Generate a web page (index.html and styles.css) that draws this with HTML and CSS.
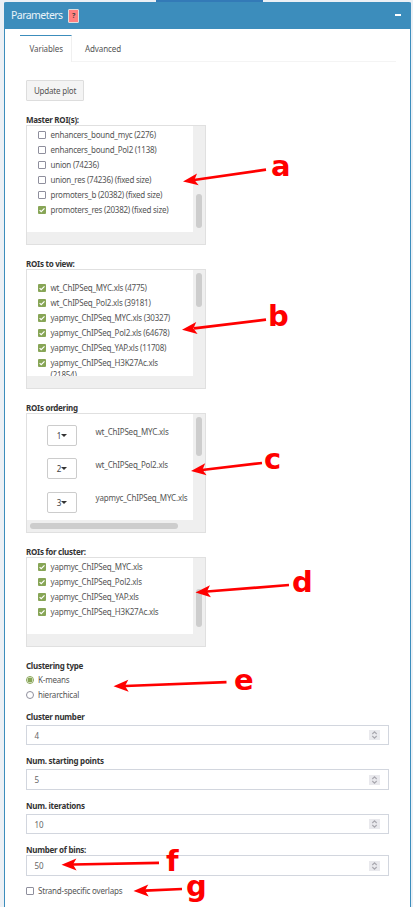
FILE: index.html
```html
<!DOCTYPE html>
<html lang="en">
<head>
<meta charset="utf-8">
<title>Parameters</title>
<link rel="stylesheet" href="styles.css">
</head>
<body>
<svg width="0" height="0" class="defs">
  <symbol id="tick" viewBox="0 0 8 8"><path d="M1.6 4.1 3.2 5.7 6.5 2.3" fill="none" stroke="#fff" stroke-width="1.2"/></symbol>
  <symbol id="spin" viewBox="0 0 11 10"><path d="M3.3 4 5.5 1.9 7.7 4M3.3 6 5.5 8.1 7.7 6" fill="none" stroke="#aaa9b0" stroke-width="1.2"/></symbol>
</svg>
<div class="strip"></div>
<section class="panel">
  <header class="head"><span class="title">Parameters</span><span class="help">?</span><span class="minus"></span></header>
  <nav class="tabs"><a class="tab active">Variables</a><a class="tab">Advanced</a></nav>
  <main class="content">
    <button class="update">Update plot</button>

    <h4>Master ROI(s):</h4>
    <div class="box">
      <div class="view master">
        <label class="row"><i class="check"></i>enhancers_bound_myc (2276)</label>
        <label class="row"><i class="check"></i>enhancers_bound_Pol2 (1138)</label>
        <label class="row"><i class="check"></i>union (74236)</label>
        <label class="row"><i class="check"></i>union_res (74236) (fixed size)</label>
        <label class="row"><i class="check"></i>promoters_b (20382) (fixed size)</label>
        <label class="row"><svg class="check on"><use href="#tick"/></svg>promoters_res (20382) (fixed size)</label>
      </div>
      <div class="track"><div class="thumb t1"></div></div>
    </div>

    <h4>ROIs to view:</h4>
    <div class="box">
      <div class="view rois">
        <label class="row"><svg class="check on"><use href="#tick"/></svg>wt_ChIPSeq_MYC.xls (4775)</label>
        <label class="row"><svg class="check on"><use href="#tick"/></svg>wt_ChIPSeq_Pol2.xls (39181)</label>
        <label class="row"><svg class="check on"><use href="#tick"/></svg>yapmyc_ChIPSeq_MYC.xls (30327)</label>
        <label class="row"><svg class="check on"><use href="#tick"/></svg>yapmyc_ChIPSeq_Pol2.xls (64678)</label>
        <label class="row"><svg class="check on"><use href="#tick"/></svg>yapmyc_ChIPSeq_YAP.xls (11708)</label>
        <label class="row"><svg class="check on"><use href="#tick"/></svg>yapmyc_ChIPSeq_H3K27Ac.xls</label>
        <div class="wrapped">(21854)</div>
      </div>
      <div class="track"><div class="thumb t2"></div></div>
    </div>

    <h4>ROIs ordering</h4>
    <div class="box">
      <div class="view order">
        <div class="item"><span class="select">1<i class="caret"></i></span><span class="name">wt_ChIPSeq_MYC.xls</span></div>
        <div class="item"><span class="select">2<i class="caret"></i></span><span class="name">wt_ChIPSeq_Pol2.xls</span></div>
        <div class="item"><span class="select">3<i class="caret"></i></span><span class="name">yapmyc_ChIPSeq_MYC.xls</span></div>
      </div>
      <div class="track"><div class="thumb t3"></div></div>
      <div class="hthumb"></div>
    </div>

    <h4>ROIs for cluster:</h4>
    <div class="box short">
      <div class="view cluster">
        <label class="row"><svg class="check on"><use href="#tick"/></svg>yapmyc_ChIPSeq_MYC.xls</label>
        <label class="row"><svg class="check on"><use href="#tick"/></svg>yapmyc_ChIPSeq_Pol2.xls</label>
        <label class="row"><svg class="check on"><use href="#tick"/></svg>yapmyc_ChIPSeq_YAP.xls</label>
        <label class="row"><svg class="check on"><use href="#tick"/></svg>yapmyc_ChIPSeq_H3K27Ac.xls</label>
      </div>
      <div class="track"><div class="thumb t4"></div></div>
    </div>

    <h4>Clustering type</h4>
    <div class="radios">
      <label class="row"><i class="radio picked"></i>K-means</label>
      <label class="row"><i class="radio"></i>hierarchical</label>
    </div>

    <h4 class="first">Cluster number</h4>
    <div class="field f1"><span>4</span><svg class="spin"><use href="#spin"/></svg></div>
    <h4 class="second">Num. starting points</h4>
    <div class="field f2"><span>5</span><svg class="spin"><use href="#spin"/></svg></div>
    <h4 class="third">Num. iterations</h4>
    <div class="field f1"><span>10</span><svg class="spin"><use href="#spin"/></svg></div>
    <h4 class="fourth">Number of bins:</h4>
    <div class="field f4"><span>50</span><svg class="spin"><use href="#spin"/></svg></div>
    <label class="row strand"><i class="check"></i>Strand-specific overlaps</label>
  </main>
</section>
<svg class="notes" viewBox="0 0 413 907">
  <defs><path id="head" d="M0 0 15-6 11.5 0 15 6Z"/></defs>
  <g fill="none" stroke="#f00" stroke-width="2.7">
    <path d="M194 180 266 169.700M194 328.400 266 319.600M202 470 262 463M207 591.500 289 585M125 686 226.500 682.200M73 864.500 159 862.800M145 890.600 182 889"/>
  </g>
  <g fill="#f00">
    <use href="#head" transform="translate(183 181.500) rotate(-8)"/>
    <use href="#head" transform="translate(182 329.700) rotate(-6.500)"/>
    <use href="#head" transform="translate(191 471) rotate(-6.500)"/>
    <use href="#head" transform="translate(195.500 592.500) rotate(-4.500)"/>
    <use href="#head" transform="translate(113.500 686.300) rotate(-2)"/>
    <use href="#head" transform="translate(61.500 864.800) rotate(-1)"/>
    <use href="#head" transform="translate(133.500 891) rotate(-2)"/>
  </g>
  <g class="letters">
    <text x="271" y="176">a</text><text x="268" y="325.500">b</text><text x="264" y="468.500">c</text><text x="292" y="591.500">d</text><text x="234" y="690">e</text><text x="166" y="871">f</text><text x="186" y="895.500">g</text>
  </g>
</svg>
</body>
</html>
```
FILE: styles.css
```css
* { box-sizing: border-box; }
html, body { margin: 0; height: 907px; overflow: hidden; }
body { background: #ecf0f5; color: #555; font: 8px/15px "Noto Sans", sans-serif; letter-spacing: -0.2px; }
.defs { position: absolute; }
.strip { width: 107px; height: 2px; margin-left: 156px; background: #337ab7; }
.panel { height: 905px; margin: 0 2px 0 4px; background: #fff; border: solid #3c8dbc; border-width: 0 1px; border-radius: 2px 2px 0 0; }
.head { display: flex; align-items: center; height: 27px; margin: 0 -1px; padding: 0 10px 0 7px; background: #3c8dbc; color: #fff; border-radius: 2px 2px 0 0; }
.title { width: 51px; font-size: 10.500px; letter-spacing: -0.550px; color: #e9f3f9; }
.help { width: 11px; height: 14px; margin-left: 6px; border: 1px solid #ddd; border-radius: 1px; background: #ff7f7f; color: #444; font: bold 7px/12px "Noto Sans", sans-serif; text-align: center; }
.minus { width: 6px; height: 2px; margin: -1px 0 0 auto; background: #fff; }
.tabs { display: flex; height: 27px; margin: 6px 14px 0 15px; border-bottom: 1px solid #f4f4f4; }
.tab { height: 27px; padding: 6px 9px 0 13px; letter-spacing: -0.100px; }
.active { width: 52px; padding: 5px 0 0 9.500px; background: #fff; border-top: 1px solid #3c8dbc; border-right: 1px solid #f0f0f0; }
.content { display: flex; flex-direction: column; padding: 18px 21px 0; }
.update { width: 58px; height: 21px; padding: 0; border: 1px solid #ddd; border-radius: 1px; background: #f4f4f4; color: #555; font: 8px/18px "Noto Sans", sans-serif; letter-spacing: -0.200px; }
h4 { height: 12px; margin: 12px 0 0; color: #333; font-size: 8px; line-height: 13px; letter-spacing: -0.270px; }
.box { position: relative; display: flex; flex: none; width: 180px; height: 120px; border: 1px solid #e0e0e0; background: #efefef; }
.view { width: 166px; height: 106px; overflow: hidden; background: #fff; }
.track { width: 12px; padding-left: 3px; }
.thumb { width: 6px; border-radius: 3px; background: #cdcdcd; }
.t1 { height: 34px; margin-top: 68px; }
.t2 { height: 34px; margin-top: 3px; }
.t3 { height: 39px; margin-top: 3px; }
.t4 { height: 38px; margin-top: 31px; }
.hthumb { position: absolute; left: 3px; bottom: 3px; width: 148px; height: 6px; border-radius: 3px; background: #cdcdcd; }
.master { padding: 1px 0 0 11px; letter-spacing: -0.240px; }
.rois { padding: 10px 0 0 11px; letter-spacing: -0.220px; }
.cluster { height: 76px; padding: 1px 0 0 11px; }
.short { height: 90px; }
.row { display: flex; align-items: center; height: 15px; white-space: nowrap; }
.wrapped { padding-left: 12.500px; line-height: 9px; }
.check { flex: none; width: 8px; height: 8px; margin-right: 4.500px; border: 1px solid #8f8f9d; border-radius: 1px; background: #fff; }
.check.on { border: 0; background: #87a556; }
.order { padding: 11px 0 0 20px; }
.item { display: flex; height: 33.400px; }
.select { display: flex; align-items: center; justify-content: center; width: 30px; height: 21px; margin-right: 18.500px; border: 1px solid #ccc; border-radius: 2px; color: #444; }
.caret { border: solid transparent; border-width: 3.500px 3px 0; border-top-color: #333; }
.name { margin-top: -1.500px; }
.radios { margin-top: 1px; }
.radio { width: 8px; height: 8px; margin-right: 4px; border: 1px solid #8f8f9d; border-radius: 50%; }
.picked { border-color: #87a556; background: radial-gradient(#87a556 0 2.200px, #fff 2.700px); }
h4.first { margin-top: 8px; }
h4.second, h4.third { margin-top: 9px; }
h4.fourth { margin-top: 9px; }
.field { display: flex; flex: none; align-items: center; justify-content: space-between; width: 363px; height: 20px; margin-top: 3px; padding: 0 8px 0 7.500px; border: 1px solid #d2d6de; color: #666; }
.f2 { height: 21px; }
.f4 { height: 21px; margin-top: 0; }
.spin { width: 11px; height: 10px; background: #e9e9ed; }
.strand { margin-top: 7px; }
.strand .check { margin-right: 4px; }
.notes { position: absolute; top: 0; left: 0; width: 413px; height: 907px; }
.letters { fill: #f00; font: bold 29px "DejaVu Sans", sans-serif; letter-spacing: 0; }
```
